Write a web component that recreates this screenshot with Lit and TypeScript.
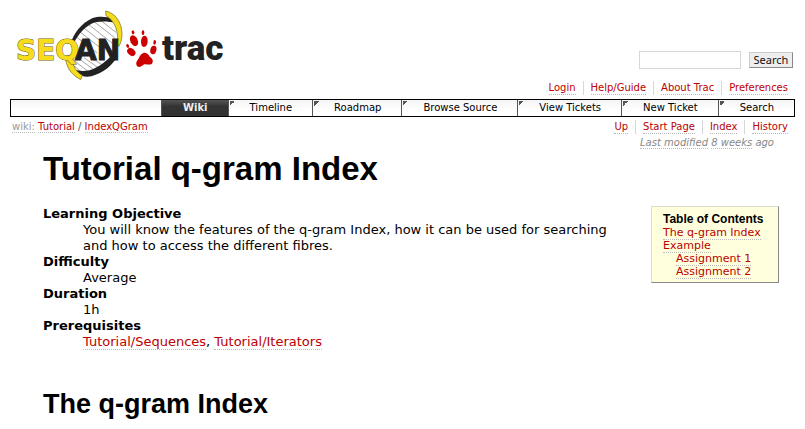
import { LitElement, html, css, svg } from "lit";
import { customElement } from "lit/decorators.js";

const metaLinks = ["Login", "Help/Guide", "About Trac", "Preferences"];
const tabs = ["Wiki", "Timeline", "Roadmap", "Browse Source", "View Tickets", "New Ticket", "Search"];
const contextLinks = ["Up", "Start Page", "Index", "History"];

@customElement("site-logo")
class SiteLogo extends LitElement {
  static styles = css`
    :host { display: block; }
    svg { display: block; }
    .word { font: 700 28px "DejaVu Sans", sans-serif; paint-order: stroke; }
    .seq { fill: #f7dc1c; stroke: #6b6420; stroke-width: 1; }
    .an { fill: #222; stroke: #222; stroke-width: 1; }
    .trac { font: 900 35px Roboto, sans-serif; fill: #222; }
  `;
  render() {
    const rungs = [[194, 92, 262, 144], [206, 78, 276, 132], [219, 67, 292, 124], [234, 57, 306, 114], [252, 50, 314, 98], [272, 46, 318, 82],
      [184, 160, 240, 204], [182, 174, 218, 204], [200, 156, 262, 202], [222, 158, 276, 196], [246, 160, 290, 188]];
    return html`<svg width="220" height="80" viewBox="0 0 220 80" role="img" aria-label="SeqAn trac">
      <g transform="scale(.33333)">
        <path d="M186 118C196 84 222 56 256 42C280 38 303 42 318 54C326 86 322 126 300 166C270 200 226 212 198 202C184 190 176 150 186 118Z" fill="#fff"/>
        ${rungs.map(([a, b, c, d]) => svg`<path d="M${a} ${b}L${c} ${d}" stroke="#777" stroke-width="2"/>`)}
        <path d="M182 118C188 88 214 54 248 39C266 33 290 34 312 42L318 54C296 49 276 48 256 52C228 60 204 88 190 118Z" fill="#222"/>
        <path d="M324 150C310 180 280 204 244 214C228 217 212 214 196 205L199 195C230 204 266 192 304 152Z" fill="#222"/>
        <path d="M287 18C316 24 336 52 336 88C336 104 332 114 327 124L322 120C328 82 314 46 288 32Z" fill="#f7dc1c" stroke="#6b6420" stroke-width="2"/>
        <path d="M166 152C168 186 180 206 212 224L217 211C198 200 188 184 184 152Z" fill="#f7dc1c" stroke="#6b6420" stroke-width="2"/>
      </g>
      <text class="word seq" x="6" y="55">SEQ</text>
      <text class="word an" x="65" y="55">AN</text>
      <g transform="translate(114 23) scale(.33333)" fill="#c00">
        <ellipse cx="27" cy="13" rx="4" ry="6" transform="rotate(-15 27 13)"/>
        <ellipse cx="30" cy="38" rx="11" ry="17" transform="rotate(-25 30 38)"/>
        <ellipse cx="57" cy="14" rx="4" ry="7"/>
        <ellipse cx="61" cy="40" rx="10" ry="17" transform="rotate(4 61 40)"/>
        <ellipse cx="92" cy="43" rx="4" ry="7" transform="rotate(8 92 43)"/>
        <ellipse cx="88" cy="66" rx="9" ry="13" transform="rotate(14 88 66)"/>
        <ellipse cx="11" cy="54" rx="4" ry="6" transform="rotate(-25 11 54)"/>
        <ellipse cx="22" cy="72" rx="10" ry="14" transform="rotate(-48 22 72)"/>
        <path d="M58 75C68 71 74 80 78 87C86 92 89 99 84 107C76 113 68 107 61 109C54 113 48 121 39 114C33 104 41 96 45 90C47 84 50 78 58 75Z"/>
      </g>
      <text class="trac" x="152" y="55">trac</text>
    </svg>`;
  }
}

@customElement("app-root")
class AppRoot extends LitElement {
  static styles = css`
    :host { display: block; background: #fff; color: #000; font: 13px/16px "DejaVu Sans", Verdana, sans-serif; padding: 5px 10px 0; }
    a { color: #b00; text-decoration: none; border-bottom: 1px dotted #bbb; }
    .header { display: flex; justify-content: space-between; align-items: flex-end; height: 76px; }
    .search { display: flex; gap: 8px; padding: 0 2px 12px 0; align-items: center; }
    .header site-logo { align-self: flex-start; }
    .search input { box-sizing: border-box; width: 102px; height: 18px; border: 1px solid #d7d7d7; padding: 0 4px; font: inherit; }
    .search button { box-sizing: border-box; height: 16px; width: 44px; padding: 0; border: 1px solid; border-color: #ccc #888 #888 #ccc; background: #eee; color: #111; font: 11px/12px "Noto Sans", sans-serif; }
    .links { display: flex; justify-content: flex-end; list-style: none; margin: 0; padding: 0; font-size: 10px; line-height: 12px; }
    .links li { padding: 1px 7px 0; border-right: 1px solid #d7d7d7; }
    .links li:last-child { border-right: 0; }
    .links a { display: block; }
    .nav ul { display: flex; justify-content: flex-end; list-style: none; margin: 4px 0 0; padding: 0; border: 1px solid #000; background: linear-gradient(#f4f4f4, #fff 60%); font-size: 10px; line-height: 16px; }
    .nav li { border-left: 1px solid #555; background: linear-gradient(135deg, #555 50%, transparent 50%) 1px 1px / 5px 5px no-repeat; }
    .nav a { display: block; padding: 0 20px 0 21px; border: 0; color: #000; }
    .nav .active { background: linear-gradient(#555, #333 40%, #333); }
    .nav .active a { color: #eee; font-weight: 700; }
    .context { display: flex; justify-content: space-between; margin-top: 3px; padding-left: 2px; font-size: 10px; line-height: 13px; color: #555; }
    .context .root { color: #999; }
    .modified { margin: 3px 21px 0 0; text-align: right; font-size: 10px; line-height: 12px; font-style: italic; color: #888; }
    .modified a { color: #888; }
    .wiki { padding: 0 6px 0 33px; }
    h1, h2 { margin: 0; font-family: "Liberation Sans", Arial, sans-serif; }
    h1 { font-size: 33px; line-height: 40px; }
    h2 { font-size: 27px; line-height: 32px; margin-top: 38px; }
    .body { display: flex; gap: 20px; align-items: flex-start; margin: 17px 10px 0 0; }
    dl { flex: 1; margin: 0; }
    dt { font-weight: 700; }
    dd { margin: 0 0 0 40px; }
    .toc { box-sizing: border-box; width: 128px; background: #ffffdd; border: 1px solid; border-color: #ddc #888 #888 #ddc; padding: 6px 10px 4px 11px; font-size: 11px; line-height: 13px; }
    .toc h4 { margin: 0; font: 700 12px/13px "Liberation Sans", Arial, sans-serif; }
    .toc ul { list-style: none; margin: 0; padding: 0; }
    .toc ul ul { padding-left: 13px; }
  `;
  private list(items: string[]) {
    return html`<ul class="links">${items.map((t) => html`<li><a href="#">${t}</a></li>`)}</ul>`;
  }
  render() {
    return html`
      <header class="header">
        <site-logo></site-logo>
        <form class="search"><input type="text" aria-label="Search query"><button type="button">Search</button></form>
      </header>
      ${this.list(metaLinks)}
      <nav class="nav"><ul>${tabs.map((t, i) => html`<li class=${i ? "" : "active"}><a href="#">${t}</a></li>`)}</ul></nav>
      <div class="context">
        <div><a class="root" href="#">wiki:</a> <a href="#">Tutorial</a> / <a href="#">IndexQGram</a></div>
        ${this.list(contextLinks)}
      </div>
      <p class="modified"><a href="#">Last modified</a> <a href="#">8 weeks</a> ago</p>
      <main class="wiki">
        <h1>Tutorial q-gram Index</h1>
        <div class="body">
          <dl>
            <dt>Learning Objective</dt>
            <dd>You will know the features of the q-gram Index, how it can be used for searching and how to access the different fibres.</dd>
            <dt>Difficulty</dt><dd>Average</dd>
            <dt>Duration</dt><dd>1h</dd>
            <dt>Prerequisites</dt>
            <dd><a href="#">Tutorial/Sequences</a>, <a href="#">Tutorial/Iterators</a></dd>
          </dl>
          <nav class="toc"><h4>Table of Contents</h4>
            <ul><li><a href="#">The q-gram Index</a></li><li><a href="#">Example</a>
              <ul><li><a href="#">Assignment 1</a></li><li><a href="#">Assignment 2</a></li></ul></li></ul>
          </nav>
        </div>
        <h2>The q-gram Index</h2>
      </main>`;
  }
}
